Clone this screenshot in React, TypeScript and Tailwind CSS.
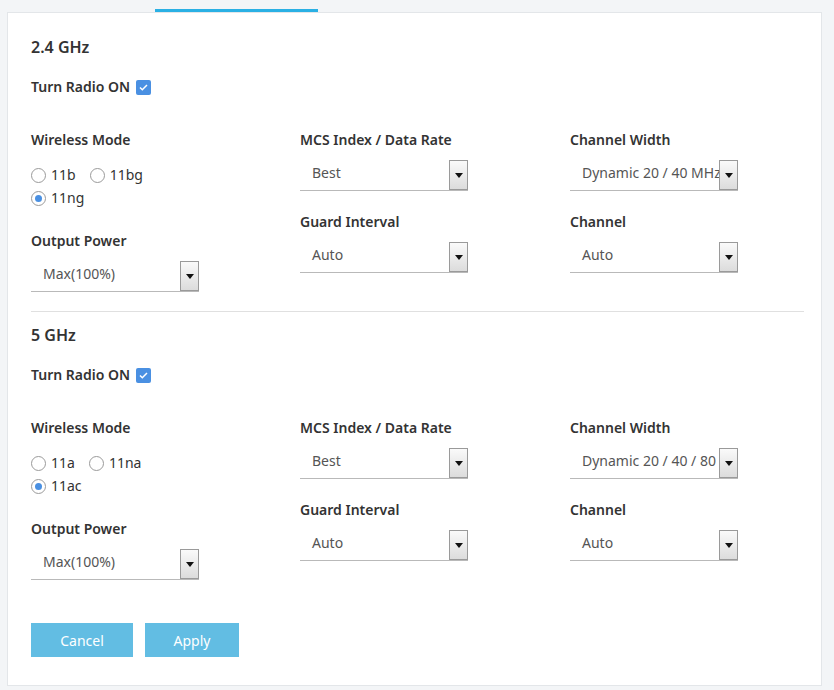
import React from "react";

const font = { fontFamily: '"Noto Sans", "Open Sans", sans-serif' };

function Select({ value, w = "w-[168px]" }: { value: string; w?: string }) {
  return (
    <div className={`flex items-end ${w} h-[41px] border-b border-[#b9b9b9]`}>
      <div className="flex-1 pl-3 pb-[7px] text-[14px] text-[#555] whitespace-nowrap overflow-hidden">{value}</div>
      <div className="w-[19px] h-[30px] shrink-0 border border-[#9a9a9a] bg-gradient-to-b from-[#fafafa] to-[#dcdcdc] flex items-center justify-center">
        <svg width="8" height="5" viewBox="0 0 8 5"><path d="M0 0h8L4 5z" fill="#111" /></svg>
      </div>
    </div>
  );
}

function Radio({ on, label }: { on?: boolean; label: string }) {
  return (
    <span className="flex items-center gap-[5px] text-[14px] leading-5 text-[#333]">
      <span className="w-[15px] h-[15px] rounded-full border border-[#9a9a9a] bg-white flex items-center justify-center">
        {on && <span className="w-[7px] h-[7px] rounded-full bg-[#4a90e2]" />}
      </span>
      {label}
    </span>
  );
}

function Label({ children }: { children: React.ReactNode }) {
  return <div className="text-[14px] font-semibold text-[#333] leading-5">{children}</div>;
}

function Band({ title, modes, width }: { title: string; modes: string[]; width: string }) {
  return (
    <div>
      <div className="text-[16px] font-semibold text-[#333] leading-6">{title}</div>
      <div className="mt-[18px] flex items-center gap-[6px]">
        <Label>Turn Radio ON</Label>
        <span className="w-[15px] h-[15px] rounded-[2px] bg-[#4a90e2] flex items-center justify-center">
          <svg width="9" height="7" viewBox="0 0 9 7"><path d="M1 3.5l2.3 2.2L8 1" stroke="#fff" strokeWidth="1.5" fill="none" /></svg>
        </span>
      </div>
      <div className="mt-[33px] grid grid-cols-[269px_270px_1fr]">
        <div>
          <Label>Wireless Mode</Label>
          <div className="mt-[15px] flex gap-[14px]"><Radio label={modes[0]} /><Radio label={modes[1]} /></div>
          <div className="mt-[3px]"><Radio on label={modes[2]} /></div>
          <div className="mt-[23px]"><Label>Output Power</Label></div>
          <Select value="Max(100%)" />
        </div>
        <div>
          <Label>MCS Index / Data Rate</Label>
          <Select value="Best" />
          <div className="mt-[21px]"><Label>Guard Interval</Label></div>
          <Select value="Auto" />
        </div>
        <div>
          <Label>Channel Width</Label>
          <Select value={width} />
          <div className="mt-[21px]"><Label>Channel</Label></div>
          <Select value="Auto" />
        </div>
      </div>
    </div>
  );
}

export default function App() {
  return (
    <div style={font} className="w-[834px] h-[690px] bg-[#f3f5f7] overflow-hidden">
      <div className="h-[12px] flex">
        <div className="w-[155px]" />
        <div className="w-[163px] h-[3px] mt-[9px] bg-[#2ab0e4]" />
      </div>
      <div className="ml-[7px] w-[815px] h-[674px] bg-white border border-[#e3e6e9] px-[23px] pt-[22px]">
        <Band title="2.4 GHz" modes={["11b", "11bg", "11ng"]} width="Dynamic 20 / 40 MHz" />
        <div className="mt-[19px] -mr-[6px] border-t border-[#e0e0e0]" />
        <div className="mt-[11px]">
          <Band title="5 GHz" modes={["11a", "11na", "11ac"]} width="Dynamic 20 / 40 / 80 MHz" />
        </div>
        <div className="mt-[43px] flex gap-[12px]">
          <button className="w-[102px] h-[34px] bg-[#62bde3] text-white text-[14px]">Cancel</button>
          <button className="w-[94px] h-[34px] bg-[#62bde3] text-white text-[14px]">Apply</button>
        </div>
      </div>
    </div>
  );
}
